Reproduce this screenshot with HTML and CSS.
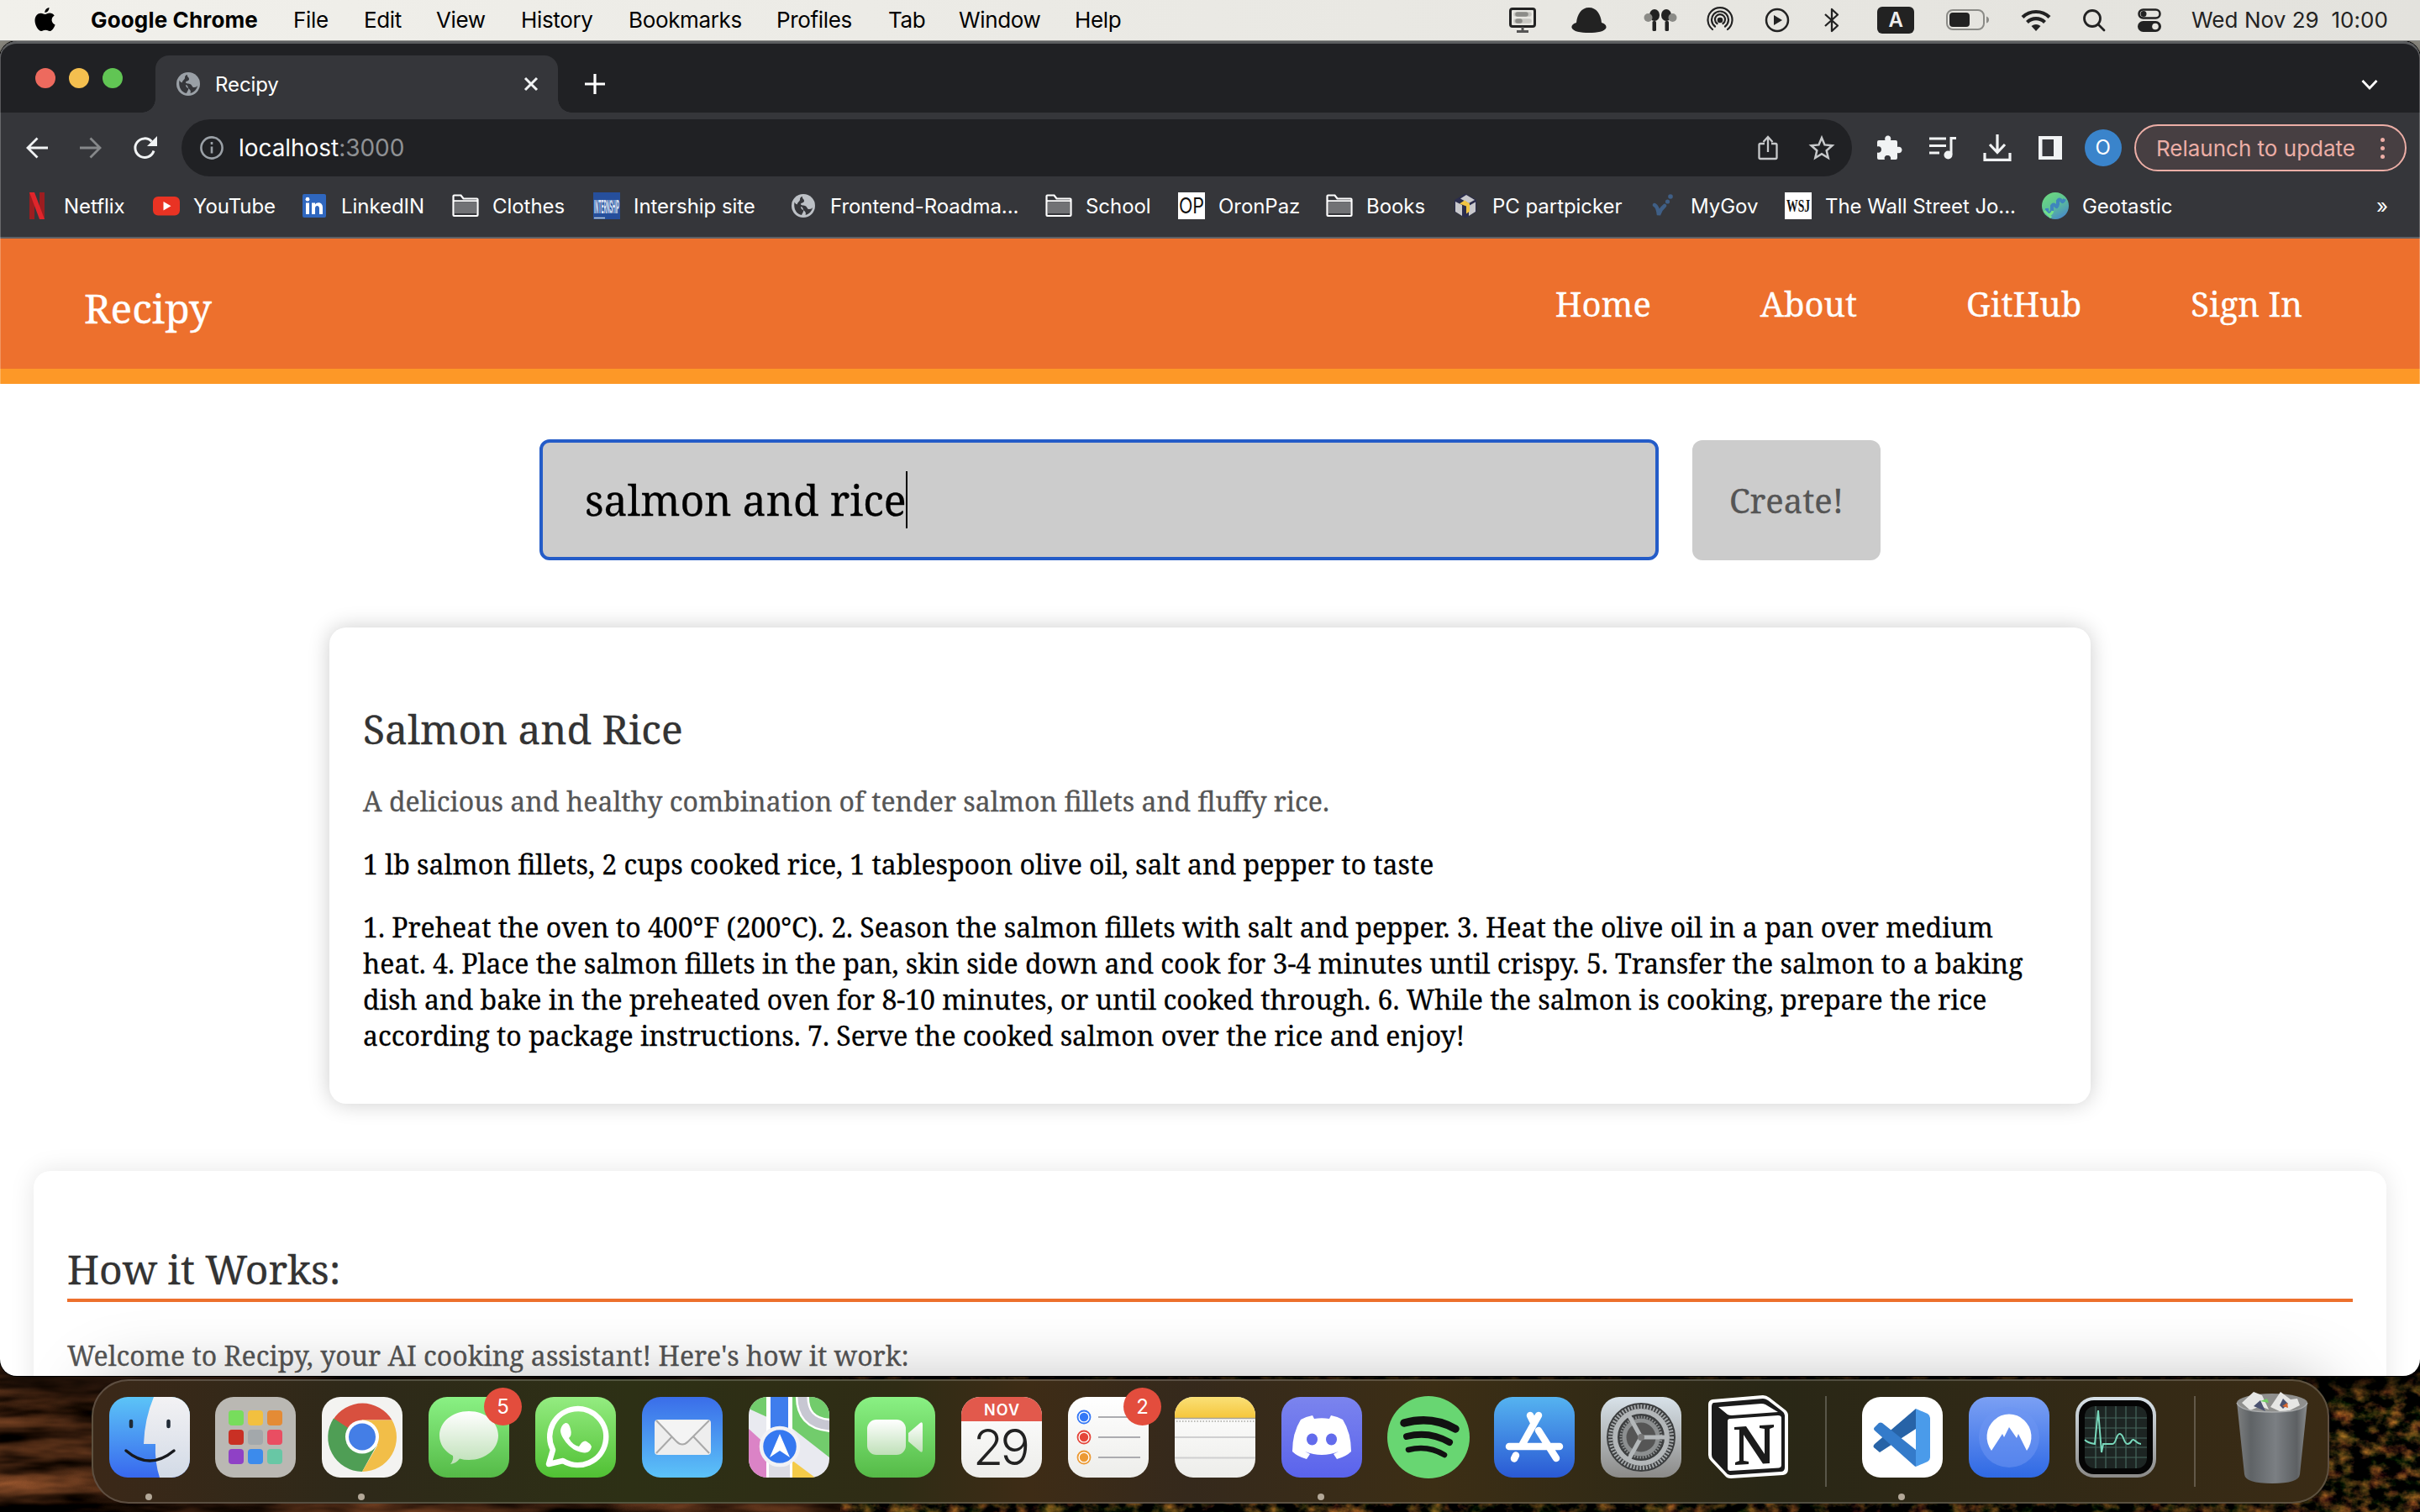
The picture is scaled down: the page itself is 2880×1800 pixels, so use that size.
FILE: index.html
```html
<!DOCTYPE html>
<html lang="en">
<head>
<meta charset="utf-8">
<title>Recipy</title>
<link rel="stylesheet" href="styles.css">
</head>
<body>
<svg class="defs" width="0" height="0" aria-hidden="true">
  <defs>
    <symbol id="globe" viewBox="0 0 28 28"><circle cx="14" cy="14" r="14" fill="currentColor"/><path d="M3.5 9.5C5 13 8 12 10 13.5s.5 4 3 5 .5 3-1 6.500C6 24 2 18 3.500 9.500zM13 3c-1 2.500 2.500 3 2 5.500s-4 1.500-4 3.500 4 1 6 2.500 1.500 3.500 4 3.500 3-1 4-2c-.5 4-4 8-8.500 9 1-2.500 0-4-1.500-5s-1-4-3.500-5S8 14.500 7 12.500 11 8 10 6c0-1 1-3 3-3z" fill="var(--land)"/></symbol>
    <symbol id="folder" viewBox="0 0 32 28"><path d="M1.500 25V2.500q0-1 1-1h8l3 4h16q1 0 1 1V25q0 1-1 1h-27q-1 0-1-1z" fill="#35363a" stroke="#fff" stroke-width="2.200"/><path d="M3 10h26v13H3z" fill="#717275"/><path d="M2 8.200h28" stroke="#fff" stroke-width="2"/></symbol>
    <linearGradient id="gFinder" x1="0" y1="0" x2="0" y2="1"><stop offset="0" stop-color="#5cc4f7"/><stop offset="1" stop-color="#3868ee"/></linearGradient>
    <linearGradient id="gFace" x1="0" y1="0" x2="0" y2="1"><stop offset="0" stop-color="#f3f2f4"/><stop offset="1" stop-color="#d2dae6"/></linearGradient>
    <linearGradient id="gGreen" x1="0" y1="0" x2="0" y2="1"><stop offset="0" stop-color="#8af184"/><stop offset="1" stop-color="#55ba47"/></linearGradient>
    <linearGradient id="gWhats" x1="0" y1="0" x2="0" y2="1"><stop offset="0" stop-color="#94ec81"/><stop offset="1" stop-color="#50c033"/></linearGradient>
    <linearGradient id="gMail" x1="0" y1="0" x2="0" y2="1"><stop offset="0" stop-color="#3a6de9"/><stop offset="1" stop-color="#5cc3f8"/></linearGradient>
    <linearGradient id="gWhite" x1="0" y1="0" x2="0" y2="1"><stop offset="0" stop-color="#fff"/><stop offset="1" stop-color="#ededea"/></linearGradient>
    <linearGradient id="gGlass" x1="0" y1="0" x2="0" y2="1"><stop offset="0" stop-color="#fff"/><stop offset="1" stop-color="#bfe0b8"/></linearGradient>
    <linearGradient id="gYellow" x1="0" y1="0" x2="0" y2="1"><stop offset="0" stop-color="#fae077"/><stop offset="1" stop-color="#f5c63c"/></linearGradient>
    <linearGradient id="gDiscord" x1="0" y1="0" x2="0" y2="1"><stop offset="0" stop-color="#7b84ee"/><stop offset="1" stop-color="#5a63ec"/></linearGradient>
    <linearGradient id="gStore" x1="0" y1="0" x2="0" y2="1"><stop offset="0" stop-color="#55b3f0"/><stop offset="1" stop-color="#2a59d4"/></linearGradient>
    <linearGradient id="gGray" x1="0" y1="0" x2="0" y2="1"><stop offset="0" stop-color="#d8e2e9"/><stop offset="1" stop-color="#8b8a88"/></linearGradient>
    <linearGradient id="gNord" x1="0" y1="0" x2="0" y2="1"><stop offset="0" stop-color="#7ba0f4"/><stop offset="1" stop-color="#2f69e4"/></linearGradient>
    <linearGradient id="gTrash" x1="0" y1="0" x2="1" y2="0"><stop offset="0" stop-color="#7d7f80"/><stop offset=".2" stop-color="#5f6366"/><stop offset=".55" stop-color="#7b7f83"/><stop offset=".85" stop-color="#5d6063"/><stop offset="1" stop-color="#8b8d8e"/></linearGradient>
    <linearGradient id="gGeo" x1="0" y1="0" x2=".6" y2="1"><stop offset="0" stop-color="#6fdc7c"/><stop offset=".5" stop-color="#5fc591"/><stop offset="1" stop-color="#4a8fc4"/></linearGradient>
    <clipPath id="tile"><rect width="96" height="96" rx="22"/></clipPath>
    <filter id="bark" x="0" y="0" width="100%" height="100%" color-interpolation-filters="sRGB"><feTurbulence type="fractalNoise" baseFrequency=".006 .03" numOctaves="4" seed="8"/><feColorMatrix values="1.200 0 0 0 -.39 .700 0 0 0 -.24 .400 0 0 0 -.15 0 0 0 0 1"/></filter>
    <filter id="leaves" x="0" y="0" width="100%" height="100%" color-interpolation-filters="sRGB"><feTurbulence type="fractalNoise" baseFrequency=".05 .07" numOctaves="4" seed="3"/><feColorMatrix values="1.500 0 0 0 -.63 .900 .200 0 0 -.46 .300 0 0 0 -.12 0 0 0 0 1"/></filter>
  </defs>
</svg>
<svg class="wallpaper" viewBox="0 0 2880 180" width="2880" height="180"><rect width="1000" height="180" filter="url(#bark)"/><rect x="1000" width="1880" height="180" filter="url(#leaves)"/></svg>

<div class="desktop">
  <header class="menubar">
    <nav class="menus">
      <span><svg width="27" height="32" viewBox="0 0 27 32"><path d="M18.500 1c.2 3-2.300 6-5.200 6C13 4.200 15.700 1.300 18.500 1zM13.700 9c1.300 0 3-1.500 5.500-1.500 2.200 0 4.300 1.200 5.500 3-4.600 2.700-3.900 9 .9 10.900-1 3-3.600 7.600-6.400 7.600-2 0-2.700-1.200-5-1.200-2.400 0-3.200 1.200-5 1.200C5.500 29 1.500 22 1.500 16.500c0-5.500 3.500-8.800 7-8.800 2.300 0 4 1.300 5.200 1.300z"/></svg></span>
      <b>Google Chrome</b><span>File</span><span>Edit</span><span>View</span><span>History</span><span>Bookmarks</span><span>Profiles</span><span>Tab</span><span>Window</span><span>Help</span>
    </nav>
    <div class="status">
      <span><svg width="32" height="30" viewBox="0 0 32 30"><rect x="1.500" y="1.500" width="29" height="21" rx="2.500" fill="none" stroke="#222" stroke-width="3"/><path d="M8 8h16M8 16h16" stroke="#c8c7c2" stroke-width="5.500" stroke-linecap="round"/><path d="M10 8h10M10 16h3" stroke="#8c8c88" stroke-width="5.500" stroke-linecap="round"/><path d="M16 23v5M9 28.500h14" stroke="#555" stroke-width="3"/></svg></span>
      <span><svg width="42" height="32" viewBox="0 0 42 32"><path d="M21 1c9 0 14 8 15 18 4 1 6 3.500 5.500 6C40 29.500 31 31 21 31S2 29.500.5 25C0 22.500 2 20 6 19 7 9 12 1 21 1z" fill="#222"/></svg></span>
      <span><svg width="40" height="28" viewBox="0 0 40 28"><g fill="#222"><ellipse cx="13" cy="8" rx="6" ry="7"/><ellipse cx="27" cy="8" rx="6" ry="7"/><rect x="10.500" y="15" width="4.500" height="12" rx="1.500"/><rect x="25.500" y="15" width="4.500" height="12" rx="1.500"/></g><g fill="#8b8b87"><ellipse cx="5.500" cy="11" rx="5" ry="5"/><ellipse cx="34.500" cy="11" rx="5" ry="5"/></g></svg></span>
      <span><svg width="32" height="32" viewBox="0 0 32 32" fill="none" stroke="#222" stroke-width="2.200" stroke-linecap="round"><circle cx="16" cy="16" r="2.200" fill="#222"/><path d="M7 27a14.500 14.500 0 1 1 18 0M10 23.500a10 10 0 1 1 12 0M12.500 20a6 6 0 1 1 7 0"/></svg></span>
      <span><svg width="30" height="30" viewBox="0 0 30 30"><circle cx="15" cy="15" r="13" fill="none" stroke="#222" stroke-width="2.500"/><path d="M11 9l10 6-10 6z" fill="#222"/></svg></span>
      <span><svg width="20" height="30" viewBox="0 0 20 30" fill="none" stroke="#222" stroke-width="2.300" stroke-linejoin="round"><path d="M2 8l15 13.500L10 28V2l7 6.500L2 22"/></svg></span>
      <span><i class="lang">A</i></span>
      <span><svg width="52" height="26" viewBox="0 0 52 26"><rect x="1" y="1" width="44" height="23" rx="7" fill="none" stroke="#8b8b87" stroke-width="2"/><rect x="4" y="4" width="24" height="17" rx="4" fill="#222"/><path d="M48 8.500q3 1 3 4t-3 4z" fill="#8b8b87"/></svg></span>
      <span><svg width="36" height="26" viewBox="0 0 36 26" fill="none" stroke="#222" stroke-width="4.200"><path d="M2 9.500a23 23 0 0 1 32 0M7.500 15.500a15 15 0 0 1 21 0"/><path d="M12.500 20q5.500-4 11 0L18 26z" fill="#222" stroke="none"/></svg></span>
      <span><svg width="28" height="28" viewBox="0 0 28 28" fill="none" stroke="#222" stroke-width="2.800" stroke-linecap="round"><circle cx="12" cy="12" r="9.500"/><path d="M19 19l7 7"/></svg></span>
      <span><svg width="28" height="28" viewBox="0 0 28 28"><rect x="1.500" y="1.500" width="25" height="10" rx="5" fill="none" stroke="#222" stroke-width="2.500"/><circle cx="7" cy="6.500" r="3.500" fill="#222"/><rect x="0" y="15" width="28" height="13" rx="6.500" fill="#222"/><circle cx="21" cy="21.500" r="3.800" fill="#e6e5df"/></svg></span>
      <time>Wed Nov 29&nbsp; 10:00</time>
    </div>
  </header>

  <main class="window">
    <div class="tabstrip">
      <div class="lights"><i></i><i></i><i></i></div>
      <div class="tab">
        <svg class="fav" width="28" height="28"><use href="#globe"/></svg><span>Recipy</span>
        <svg width="18" height="18" viewBox="0 0 18 18" stroke="#f1f3f4" stroke-width="3"><path d="M2 2l14 14M16 2L2 16"/></svg>
      </div>
      <svg class="plus" width="24" height="24" viewBox="0 0 24 24" stroke="#fff" stroke-width="3.200"><path d="M12 0v24M0 12h24"/></svg>
      <svg class="chev" width="20" height="14" viewBox="0 0 20 14" fill="none" stroke="#fff" stroke-width="2.800"><path d="M1.500 2L10 11l8.500-9"/></svg>
    </div>
    <div class="toolbar">
      <svg class="back" width="28" height="26" viewBox="0 0 28 26" fill="none" stroke="#f1f3f4" stroke-width="2.800"><path d="M27 13H3M14.500 1.500L3 13l11.500 11.500"/></svg>
      <svg class="fwd" width="28" height="26" viewBox="0 0 28 26" fill="none" stroke="#86888a" stroke-width="2.800"><path d="M1 13h24M13.500 1.500L25 13 13.500 24.500"/></svg>
      <svg class="reload" width="28" height="28" viewBox="0 0 28 28"><path d="M24 17.500A11.300 11.300 0 1 1 21.500 6.500" fill="none" stroke="#f1f3f4" stroke-width="3"/><path d="M28 0v12H16z" fill="#f1f3f4"/></svg>
      <div class="omnibox">
        <svg width="28" height="28" viewBox="0 0 28 28"><circle cx="14" cy="14" r="12.600" fill="none" stroke="#9aa0a6" stroke-width="2.600"/><path d="M14 12.500v8M14 7v3" stroke="#9aa0a6" stroke-width="2.600"/></svg>
        <span class="url">localhost<em>:3000</em></span>
        <svg width="24" height="30" viewBox="0 0 24 30" fill="none" stroke="#c7c9cb" stroke-width="2.300"><path d="M8 10H3q-1.500 0-1.500 1.500v15Q1.500 28 3 28h18q1.500 0 1.500-1.500v-15Q22.500 10 21 10h-5M12 20V2.500M6.500 8L12 2l5.500 6"/></svg>
        <svg class="star" width="30" height="30" viewBox="0 0 30 30" fill="none" stroke="#c7c9cb" stroke-width="2.500"><path d="M15 3l3.500 8.400 9 .8-6.800 6 2 8.800L15 22.300 7.300 27l2-8.800-6.800-6 9-.8z"/></svg>
      </div>
      <div class="actions">
        <svg width="30" height="30" viewBox="0 0 30 30" fill="#f1f3f4"><path d="M2 6h7.500C8.500 3 10 .5 12.800.5S17 3 16 6h6q2 0 2 2v6c3-1 5.500.8 5.500 3.500S27 22 24 21v6q0 2-2 2h-6c.8-3-1-5-3.700-5S8 26 9 29H2q-2 0-2-2v-6.500c3 .8 5-1 5-3.500s-2-4.500-5-3.500V8q0-2 2-2z"/></svg>
        <svg width="34" height="28" viewBox="0 0 34 28"><path d="M1 3h20M1 11.500h20M1 20h12M27 22V2.500h6" fill="none" stroke="#f1f3f4" stroke-width="3"/><circle cx="23.500" cy="22.500" r="5" fill="#f1f3f4"/></svg>
        <svg width="34" height="32" viewBox="0 0 34 32" fill="none" stroke="#f1f3f4" stroke-width="3.200"><path d="M17 0v20M8 12l9 9.500L26 12M2 22v8.300h30V22"/></svg>
        <svg width="28" height="28" viewBox="0 0 28 28"><path d="M0 0h28v28H0zM4.500 4v20H18V4z" fill="#f1f3f4" fill-rule="evenodd"/></svg>
        <i class="avatar">O</i>
        <div class="relaunch"><span>Relaunch to update</span><b></b></div>
      </div>
    </div>
    <div class="bookmarks">
      <div><svg viewBox="0 0 32 32"><path d="M7 0h6v32H7zM19 0h6v32h-6z" fill="#9c1d20"/><path d="M7 0h6l12 32h-6z" fill="#e0252b"/></svg>Netflix</div>
      <div><svg viewBox="0 0 32 32"><rect y="5" width="32" height="22.500" rx="6" fill="#e93323"/><path d="M12.500 11l9 5.200-9 5.200z" fill="#fff"/></svg>YouTube</div>
      <div><svg viewBox="0 0 32 32"><rect x="2" y="2" width="28" height="28" rx="2" fill="#2f67bf"/><path d="M6 12.500h4V26H6zM13 12.500h4v2c2-3.500 9-3 9 3.500v8h-4v-7c0-4-5-4-5 0v7h-4z" fill="#fff"/><circle cx="8" cy="8.200" r="2.400" fill="#fff"/></svg>LinkedIN</div>
      <div><svg viewBox="0 -2 32 32"><use href="#folder" width="32" height="28"/></svg>Clothes</div>
      <div><svg viewBox="0 0 32 32"><rect width="32" height="32" fill="#264f9c"/><path d="M1 30.500h13" stroke="#bcd" stroke-width="1.500"/><text x="1" y="25" textLength="30" lengthAdjust="spacingAndGlyphs" font-size="22" font-weight="700" fill="#dde6f5">INTERNSHIP</text></svg>Intership site</div>
      <div><svg class="light" viewBox="-2 -2 32 32"><use href="#globe" width="28" height="28"/></svg>Frontend-Roadma...</div>
      <div><svg viewBox="0 -2 32 32"><use href="#folder" width="32" height="28"/></svg>School</div>
      <div><svg viewBox="0 0 32 32"><rect width="32" height="32" fill="#fff"/><text x="1" y="25" textLength="30" lengthAdjust="spacingAndGlyphs" font-size="25" fill="#111">OP</text></svg>OronPaz</div>
      <div><svg viewBox="0 -2 32 32"><use href="#folder" width="32" height="28"/></svg>Books</div>
      <div><svg viewBox="0 0 32 32"><path d="M16 1.500L29 9v14l-13 7.500L3 23V9z" fill="#2b2d4c"/><path d="M4 11l8 4v13l-8-5zM20 16l8-4.500V23l-8 5z" fill="#c9c9cc"/><path d="M10 7.500L17 3l10 6-7 4z" fill="#c9c9cc"/><path d="M9 13.500l6-4 6 4v9l-4 3v-9z" fill="#f2c443"/></svg>PC partpicker</div>
      <div><svg viewBox="0 0 32 32"><path d="M5 15q4 2 5 12Q12 20 17 16" fill="none" stroke="#3f5f86" stroke-width="4.500" stroke-linecap="round"/><circle cx="20.500" cy="11" r="2.600" fill="#3f5f86"/><circle cx="24" cy="5" r="2.800" fill="#3f5f86"/></svg>MyGov</div>
      <div><svg viewBox="0 0 32 32"><rect width="32" height="32" fill="#fff"/><text x="2" y="23" textLength="28" lengthAdjust="spacingAndGlyphs" font-family="Liberation Serif, serif" font-weight="700" font-size="20" fill="#111">WSJ</text></svg>The Wall Street Jo...</div>
      <div><svg viewBox="0 0 32 32"><circle cx="16" cy="16" r="16" fill="url(#gGeo)"/><path d="M6 19v4q0 3 3 2t3-4v-5q2-3 4 0t3-2v-4q2-3 4 0t4-2" fill="none" stroke="#3f86bd" stroke-width="4"/><path d="M3 22l8 8M8 27q4-1 5-5" stroke="#72e08a" stroke-width="3" fill="none"/></svg>Geotastic</div>
      <div class="more">»</div>
    </div>

    <div class="page">
      <header class="site-header">
        <a class="brand">Recipy</a>
        <nav><a>Home</a><a>About</a><a>GitHub</a><a>Sign In</a></nav>
      </header>
      <div class="search">
        <div class="field"><span>salmon and rice</span><i class="caret"></i></div>
        <div class="button"><span>Create!</span></div>
      </div>
      <article class="recipe">
        <h1><span>Salmon and Rice</span></h1>
        <p class="muted">A delicious and healthy combination of tender salmon fillets and fluffy rice.</p>
        <p>1 lb salmon fillets, 2 cups cooked rice, 1 tablespoon olive oil, salt and pepper to taste</p>
        <p>1. Preheat the oven to 400°F (200°C). 2. Season the salmon fillets with salt and pepper. 3. Heat the olive oil in a pan over medium<br>heat. 4. Place the salmon fillets in the pan, skin side down and cook for 3-4 minutes until crispy. 5. Transfer the salmon to a baking<br>dish and bake in the preheated oven for 8-10 minutes, or until cooked through. 6. While the salmon is cooking, prepare the rice<br>according to package instructions. 7. Serve the cooked salmon over the rice and enjoy!</p>
      </article>
      <section class="how">
        <h2>How it Works:</h2>
        <p class="muted">Welcome to Recipy, your AI cooking assistant! Here's how it work:</p>
      </section>
    </div>
  </main>

  <footer class="dock">
    <div class="app on"><svg viewBox="0 0 96 96"><g clip-path="url(#tile)"><rect width="96" height="96" fill="url(#gFinder)"/><path d="M53 0Q42 26 41 56h14q-1 22 5 40h36V0z" fill="url(#gFace)"/></g><path d="M26 29v6M70.500 29v6" stroke="#1f2a36" stroke-width="4.500" stroke-linecap="round"/><path d="M20 64q28 24 57 0" fill="none" stroke="#17191d" stroke-width="3.500" stroke-linecap="round"/></svg></div>
    <div class="app"><svg viewBox="0 0 96 96"><rect width="96" height="96" rx="22" fill="#bab8b3"/><g><rect x="16" y="16" width="18" height="18" rx="4" fill="#77dd5c"/><rect x="39" y="16" width="18" height="18" rx="4" fill="#f2c03f"/><rect x="62" y="16" width="18" height="18" rx="4" fill="#e48b35"/><rect x="16" y="39" width="18" height="18" rx="4" fill="#c93024"/><rect x="39" y="39" width="18" height="18" rx="4" fill="#a3a8ab"/><rect x="62" y="39" width="18" height="18" rx="4" fill="#e94e62"/><rect x="16" y="62" width="18" height="18" rx="4" fill="#8f41c6"/><rect x="39" y="62" width="18" height="18" rx="4" fill="#3c8bec"/><rect x="62" y="62" width="18" height="18" rx="4" fill="#68c7a5"/></g></svg></div>
    <div class="app on"><svg viewBox="0 0 96 96"><rect width="96" height="96" rx="22" fill="#f3f3f1"/><path d="M48 48L13.200 27.500A41 41 0 0 1 83.500 27.500H48z" fill="#d8503f"/><path d="M48 48L14 25.500A41 41 0 0 0 48 89l17-31z" fill="#4f9e55"/><path d="M48 27.500h35.500A41 41 0 0 1 48 89l18-31z" fill="#f2be48"/><circle cx="48" cy="47.500" r="20" fill="#fff"/><circle cx="48" cy="47.500" r="16" fill="#447ee6"/></svg></div>
    <div class="app"><svg viewBox="0 0 96 96"><rect width="96" height="96" rx="22" fill="url(#gGreen)"/><path d="M48 17c20 0 35 13 35 29S68 75 48 75q-6 0-11-1.500Q33 79 26 80q4-5 3-10C19 65 13 56 13 46c0-16 15-29 35-29z" fill="url(#gGlass)"/></svg><b class="badge">5</b></div>
    <div class="app"><svg viewBox="0 0 96 96"><rect width="96" height="96" rx="22" fill="url(#gWhats)"/><path d="M16 80l5-17A33.500 33.500 0 1 1 33 76z" fill="none" stroke="#fff" stroke-width="6.500" stroke-linejoin="round"/><path d="M36 31q4-1 6 7t-2 11q4 8 12 10 5-8 9-6t6 6c-2 10-10 8-18 5S30 48 30 40q1-7 6-9z" fill="#fff"/></svg></div>
    <div class="app"><svg viewBox="0 0 96 96"><rect width="96" height="96" rx="22" fill="url(#gMail)"/><rect x="15" y="27" width="67" height="42" rx="4" fill="#eee"/><path d="M17 67l20-21M80 67L60 46" stroke="#a9a9a9" stroke-width="2"/><path d="M17 28l24 25q7 7 14 0l25-25" fill="#f4f4f4" stroke="#a9a9a9" stroke-width="2"/></svg></div>
    <div class="app"><svg viewBox="0 0 96 96"><g clip-path="url(#tile)"><rect width="96" height="96" fill="#e9eaf0"/><path d="M0 0h22v24L0 14zM50 0h46v72L50 36z" fill="#72cc6c"/><path d="M0 38l22 20v38H0z" fill="#db83c6"/><path d="M51 75l28 21H51z" fill="#f4cb49"/><path d="M64-4q-2 36 34 38" fill="none" stroke="#fff" stroke-width="16"/><path d="M64-4q-2 36 34 38" fill="none" stroke="#c7c7d2" stroke-width="11"/><path d="M21 0h31v96H21z" fill="#fff"/><path d="M26 0h21v40H26z" fill="#3f7ded"/><path d="M24 70h25v26H24z" fill="#dcdce4"/></g><circle cx="37" cy="59" r="22" fill="#3578f0" stroke="#f2f2f5" stroke-width="4.500"/><path d="M37 44l12 28-12-8-12 8z" fill="#fff"/></svg></div>
    <div class="app"><svg viewBox="0 0 96 96"><rect width="96" height="96" rx="22" fill="url(#gGreen)"/><rect x="15" y="27" width="46" height="42" rx="11" fill="url(#gGlass)"/><path d="M64 43l14-12q3-2 3 2v30q0 4-3 2L64 53z" fill="url(#gGlass)"/></svg></div>
    <div class="app"><svg viewBox="0 0 96 96"><g clip-path="url(#tile)"><rect width="96" height="96" fill="url(#gWhite)"/><rect width="96" height="29" fill="#e2594c"/></g><text x="27" y="22" textLength="42" font-size="18" font-weight="600" fill="#fff">NOV</text><text x="14" y="81" textLength="68" font-size="59" font-weight="300" fill="#222">29</text></svg></div>
    <div class="app"><svg viewBox="0 0 96 96"><rect width="96" height="96" rx="22" fill="url(#gWhite)"/><g fill="#fff" stroke-width="1.800"><circle cx="19" cy="24" r="7.500" stroke="#3478f6"/><circle cx="19" cy="48" r="7.500" stroke="#e5463a"/><circle cx="19" cy="72" r="7.500" stroke="#ec9a34"/></g><circle cx="19" cy="24" r="5.200" fill="#3478f6"/><circle cx="19" cy="48" r="5.200" fill="#e5463a"/><circle cx="19" cy="72" r="5.200" fill="#ec9a34"/><path d="M36 24h50M36 48h50M36 72h50" stroke="#acacb0" stroke-width="2"/></svg><b class="badge">2</b></div>
    <div class="app"><svg viewBox="0 0 96 96"><g clip-path="url(#tile)"><rect width="96" height="96" fill="url(#gWhite)"/><rect width="96" height="25" fill="url(#gYellow)"/><path d="M0 25.500h96" stroke="#a8a49a" stroke-width="1.500"/><path d="M2 29h94" stroke="#bcbcb8" stroke-width="2" stroke-dasharray="1.500 2"/><path d="M0 48h96M0 72.500h96" stroke="#cfcfd0" stroke-width="1.800"/></g></svg></div>
    <div class="app on"><svg viewBox="0 0 96 96"><rect width="96" height="96" rx="22" fill="url(#gDiscord)"/><path d="M37 22l2 4q9-1.500 18 0l2-4q8 1.500 14 5 10 16 10 38-6 6-17 9l-4-6 6-3q-20 8-40 0l6 3-4 6q-11-3-17-9 0-22 10-38 6-3.500 14-5z" fill="#fff"/><ellipse cx="36.500" cy="50.500" rx="6.500" ry="7" fill="#626bec"/><ellipse cx="59.500" cy="50.500" rx="6.500" ry="7" fill="#626bec"/></svg></div>
    <div class="app"><svg viewBox="0 0 96 96"><circle cx="48" cy="48" r="49" fill="#68d672"/><g fill="none" stroke="#111" stroke-linecap="round"><path d="M19 31q33-9 61 7" stroke-width="9.500"/><path d="M22 47q27-7 51 7" stroke-width="8"/><path d="M24 63q23-6 43 6" stroke-width="6.500"/></g></svg></div>
    <div class="app"><svg viewBox="0 0 96 96"><rect width="96" height="96" rx="22" fill="url(#gStore)"/><g stroke="#fff" stroke-width="8.500" stroke-linecap="round"><path d="M18 59h60M53 22L34 56M43 22l4 8M53 40l21 33M26 69.500l-2 4"/></g></svg></div>
    <div class="app"><svg viewBox="0 0 96 96"><rect width="96" height="96" rx="22" fill="url(#gGray)"/><circle cx="48" cy="48" r="41" fill="#3c3e3f"/><circle cx="48" cy="48" r="36.500" fill="none" stroke="#a5a9ab" stroke-width="5" stroke-dasharray="2 1.800"/><circle cx="48" cy="48" r="31" fill="none" stroke="#b3b7b9" stroke-width="6"/><circle cx="48" cy="48" r="20" fill="#555" stroke="#8c8f90" stroke-width="5"/><circle cx="48" cy="48" r="24" fill="none" stroke="#8c8f90" stroke-width="3" stroke-dasharray="1.700 1.700"/><path d="M48 48h32M48 48L33 21M48 48L33 75" stroke="#b3b7b9" stroke-width="5"/><circle cx="48" cy="48" r="4" fill="#777"/></svg></div>
    <div class="app"><svg viewBox="0 0 96 96"><path d="M6 3L66-2q4 0 8 3l18 14q4 3 4 7v64q0 6-6 7l-62 4q-5 0-7-3L4 76Q1 73 1 69V9q0-5 5-6z" fill="#fff"/><path d="M7 7L66 2q3 0 6 2l17 13q3 2 3 5v62q0 5-5 5l-60 4q-3 0-5-3L7 74q-2-2-2-5V12q0-4 2-5z" fill="#1b1b1b"/><path d="M13 12l51-4q3 0 5 1l15 9-55 4q-3 0-5-1zM24 29q0-3 3-3l57-4q4 0 4 3v56q0 3-3 3.500L27 88q-3 0-3-3z" fill="#fff"/><path d="M32 36l14-1 22 33V38l-6-1v-3l17-1v3l-5 2v41l-8 .5L43 45v31l6 1v3l-16 1v-3l5-2V39l-6 0z" fill="#1b1b1b"/></svg></div>
    <i class="sep"></i>
    <div class="app on"><svg viewBox="0 0 96 96"><rect width="96" height="96" rx="22" fill="#fff"/><path d="M64 14v24L21 66l-6-5q-3-2 0-5z" fill="#2763a7"/><path d="M15 36l5-5q2-1 4 0l40 32v20q-1 0-3-2L15 40q-2-2 0-4z" fill="#347bca"/><path d="M64 14l14 6q3 2 3 5v47q0 3-3 5l-14 6z" fill="#4a9bea"/></svg></div>
    <div class="app"><svg viewBox="0 0 96 96"><rect width="96" height="96" rx="22" fill="url(#gNord)"/><circle cx="48" cy="48" r="36" fill="#6d96f2" opacity=".55"/><path d="M27 64a26.500 27 0 1 1 42 0L59 44l-2 5-9-13-6 12-2-4z" fill="#fff"/></svg></div>
    <div class="app"><svg viewBox="0 0 96 96"><rect width="96" height="96" rx="22" fill="url(#gGray)"/><rect x="4" y="4" width="88" height="88" rx="18" fill="#050505"/><rect x="11" y="11" width="74" height="74" rx="12" fill="#1d2523"/><path d="M11 25h74M11 37h74M11 49h74M11 60h74M11 72h74M24 11v74M36 11v74M48 11v74M60 11v74M72 11v74" stroke="#46685e" stroke-width="1.200"/><path d="M11 51q4 4 12 5l4-40 4 50 2-10h11c5 0 4-13 9-12s4 12 9 12 4-6 7-5 4 5 9 5" fill="none" stroke="#78d8bb" stroke-width="2"/></svg></div>
    <i class="sep last"></i>
    <div class="app trash"><svg viewBox="0 0 96 96"><path d="M6 4q42 20 84 0l-9 86q-1 11-33 11T15 90z" fill="url(#gTrash)"/><ellipse cx="48" cy="5" rx="42" ry="11" fill="#8f8f8d"/><path d="M12 5l14-13 10 4 8 17-10-4-12 5zM46 10l12-18 12 9 8-1 3 8-12 6-10 2z" fill="#e6e6e4"/><path d="M26 9l8-7 6 13zM57 8l4-8 6 6-6 6z" fill="#4b5270"/><path d="M34 3l8-3 2 5z" fill="#6fce62"/><path d="M60 9l6-4 1 6z" fill="#d5642e"/><path d="M6 5q4 11 42 11T90 5" fill="none" stroke="#a9abac" stroke-width="1.500"/></svg></div>
  </footer>
</div>
</body>
</html>
```
FILE: styles.css
```css
* { box-sizing: border-box; }
body {
  margin: 0;
  width: 2880px;
  height: 1800px;
  overflow: hidden;
  background: #0d0a06;
  font-family: Inter, "Liberation Sans", sans-serif;
  position: relative;
}
i, em { font-style: normal; }
svg { display: block; flex: none; overflow: visible; }
.defs { position: absolute; }
.wallpaper { position: absolute; left: 0; bottom: 0; }
.desktop {
  position: relative;
  display: flex;
  flex-direction: column;
  align-items: center;
  height: 1800px;
  background: linear-gradient(#8f8d84, #8f8d84) 0 0 / 100% 80px no-repeat;
}

/* System menu bar */
.menubar {
  position: relative;
  z-index: 1;
  width: 100%;
  height: 49px;
  display: flex;
  justify-content: space-between;
  background: linear-gradient(90deg, #f1f0eb, #e3e2dd);
  border-bottom: 1px solid #8b8c89;
  font-size: 26px;
  line-height: 46px;
  letter-spacing: -.35px;
  color: #000;
  white-space: nowrap;
}
.menus, .status { display: flex; align-items: center; }
.menus { padding-left: 40px; }
.menus > :nth-child(1) { width: 68px; }
.menus > :nth-child(2) { width: 241px; font-weight: 700; letter-spacing: .15px; }
.menus > :nth-child(3) { width: 84px; }
.menus > :nth-child(4) { width: 86px; }
.menus > :nth-child(5) { width: 101px; }
.menus > :nth-child(6) { width: 128px; }
.menus > :nth-child(7) { width: 176px; }
.menus > :nth-child(8) { width: 133px; }
.menus > :nth-child(9) { width: 84px; }
.menus > :nth-child(10) { width: 138px; }
.status { color: #222; }
.status > :nth-child(1) { width: 74px; }
.status > :nth-child(2) { width: 86px; }
.status > :nth-child(3) { width: 75px; }
.status > :nth-child(4) { width: 69px; }
.status > :nth-child(5) { width: 70px; }
.status > :nth-child(6) { width: 64px; }
.status > :nth-child(7) { width: 82px; }
.status > :nth-child(8) { width: 89px; }
.status > :nth-child(9) { width: 73px; }
.status > :nth-child(10) { width: 66px; }
.status > :nth-child(11) { width: 64px; }
.status time { width: 272px; letter-spacing: .05px; }
.lang {
  display: block;
  width: 44px;
  height: 32px;
  border-radius: 6px;
  background: #222;
  color: #eee;
  font-size: 24px;
  font-weight: 600;
  line-height: 32px;
  text-align: center;
}

/* Browser window */
.window {
  flex: none;
  width: 2880px;
  height: 1589px;
  border-radius: 20px;
  overflow: hidden;
  background: #fff;
  box-shadow: 0 0 0 1px #000, 0 14px 30px rgba(0, 0, 0, .8);
  position: relative;
}
.window::after {
  content: "";
  position: absolute;
  inset: 0 0 1180px;
  border: 1px solid rgba(255, 255, 255, .25);
  border-top: 3px solid #5c5e60;
  border-bottom: 0;
  border-radius: 20px 20px 0 0;
}
.tabstrip {
  height: 85px;
  background: #202124;
  display: flex;
  padding: 17px 50px 0 42px;
}
.lights { display: flex; gap: 16px; padding-top: 15px; width: 143px; }
.lights i { width: 24px; height: 24px; border-radius: 50%; background: #ed6a5e; }
.lights i:nth-child(2) { background: #f4bf4f; }
.lights i:nth-child(3) { background: #61c554; }
.tab {
  position: relative;
  width: 479px;
  height: 68px;
  background: #35363a;
  border-radius: 16px 16px 0 0;
  display: flex;
  align-items: center;
  padding: 0 23px 0 25px;
  color: #fff;
  font-size: 24px;
  letter-spacing: -.1px;
}
.tab::before, .tab::after {
  content: "";
  position: absolute;
  bottom: 0;
  left: -16px;
  width: 16px;
  height: 16px;
  background: radial-gradient(circle at 0 0, transparent 15.5px, #35363a 16px);
}
.tab::after { left: auto; right: -16px; transform: scaleX(-1); }
.tab span { flex: 1; padding-left: 18px; }
.fav { color: #9aa0a6; --land: #35363a; }
.plus { margin: 22px auto 0 32px; }
.chev { margin-top: 28px; }
.toolbar {
  height: 84px;
  background: #35363a;
  display: flex;
  align-items: center;
  padding: 0 16px 0 30px;
}
.fwd { margin-left: 36px; }
.reload { margin: 0 29px 0 37px; }
.omnibox {
  width: 1988px;
  height: 68px;
  border-radius: 34px;
  background: #202124;
  display: flex;
  align-items: center;
  padding: 0 21px 0 22px;
}
.url { flex: 1; padding-left: 18px; font-size: 28px; letter-spacing: -.05px; color: #fff; }
.url em { color: #8f9194; }
.star { margin-left: 37px; }
.actions { display: flex; align-items: center; justify-content: space-between; width: 630px; margin-left: 30px; }
.avatar {
  width: 44px;
  height: 44px;
  margin: 0 -16px 0 -4px;
  border-radius: 50%;
  background: #3a84cb;
  color: #fff;
  font-size: 24px;
  line-height: 44px;
  text-align: center;
}
.relaunch {
  width: 324px;
  height: 56px;
  border: 2px solid #ecaea6;
  border-radius: 28px;
  background: #473f42;
  color: #ecaea6;
  font-size: 26px;
  display: flex;
  align-items: center;
  justify-content: space-between;
  padding: 0 24px 0 24px;
  white-space: nowrap;
}
.relaunch b { width: 5px; height: 5px; border-radius: 50%; background: #ecaea6; box-shadow: 0 -10px #ecaea6, 0 10px #ecaea6; }
.bookmarks {
  height: 66px;
  background: #35363a;
  border-bottom: 2px solid #5f6165;
  display: flex;
  padding: 0 0 10px 28px;
  color: #fff;
  font-size: 24px;
  letter-spacing: -.05px;
  white-space: nowrap;
}
.bookmarks div { flex: none; display: flex; align-items: center; gap: 16px; width: 154px; }
.bookmarks svg { width: 32px; height: 32px; }
.light { color: #bdc1c6; --land: #35363a; }
.bookmarks div:nth-child(2) { width: 176px; }
.bookmarks div:nth-child(3) { width: 180px; }
.bookmarks div:nth-child(4) { width: 168px; }
.bookmarks div:nth-child(5) { width: 234px; }
.bookmarks div:nth-child(6) { width: 304px; }
.bookmarks div:nth-child(7) { width: 158px; }
.bookmarks div:nth-child(8) { width: 176px; }
.bookmarks div:nth-child(9) { width: 150px; }
.bookmarks div:nth-child(10) { width: 236px; }
.bookmarks div:nth-child(11) { width: 160px; }
.bookmarks div:nth-child(12) { width: 306px; }
.bookmarks div:nth-child(13) { width: 398px; }
.bookmarks .more { width: 20px; }

/* Recipy site */
.page {
  font-family: "Noto Serif", "DejaVu Serif Condensed", "DejaVu Serif", serif;
  font-size: 32px;
  line-height: 43px;
  color: #000;
  -webkit-text-stroke: .3px currentColor;
}
.site-header {
  height: 173px;
  background: #ed702d;
  border-bottom: 18px solid #fd9827;
  display: flex;
  justify-content: space-between;
  color: #fff;
  padding: 0 140px 0 100px;
}
.brand { font-size: 48px; line-height: 166px; }
.site-header nav { display: flex; gap: 130px; font-size: 40px; line-height: 156px; }
.search { display: flex; justify-content: center; gap: 40px; padding-top: 66px; }
.field {
  width: 1332px;
  height: 144px;
  border: 4px solid #245cc8;
  border-radius: 12px;
  background: #ccc;
  font-size: 50px;
  display: flex;
  align-items: center;
  padding-left: 50px;
}
.caret { width: 2px; height: 68px; margin-left: -1px; background: #000; }
.button {
  width: 224px;
  height: 143px;
  margin-top: 1px;
  border-radius: 12px;
  background: #ccc;
  color: #555;
  font-size: 40px;
  display: flex;
  align-items: center;
  justify-content: center;
}
.recipe {
  width: 2096px;
  height: 567px;
  margin: 80px auto 0;
  padding: 88px 40px 0;
  border-radius: 20px;
  background: #fff;
  box-shadow: 0 0 26px rgba(0, 0, 0, .2);
  white-space: nowrap;
}
h1, h2 { margin: 0; font-size: 48px; font-weight: 400; line-height: 65px; color: #333; }
p { margin: 32px 0 0; }
.muted { color: #555; }
.how {
  height: 400px;
  margin: 80px 40px 0;
  padding: 84px 40px 0;
  border-radius: 20px;
  background: #fff;
  box-shadow: 0 0 30px rgba(0, 0, 0, .1);
}
.how h2 { height: 72px; border-bottom: 4px solid #ed702d; }
.how p { margin-top: 42px; }

/* Dock */
.dock {
  position: relative;
  flex: none;
  display: flex;
  gap: 30.850px;
  width: 2663px;
  height: 148px;
  margin-top: 4px;
  padding: 19px 0 0 19px;
  border: 2px solid rgba(255, 255, 255, .18);
  border-radius: 44px;
  background: linear-gradient(90deg, #3b2818, #2e2919 12%, #2d3015 24%, #2f2c15 36%, #3e2c16 42%, #35291c 49%, #3c2e15 60%, #292716 75%, #302916 85%, #3a2b15);
  box-shadow: 0 0 80px rgba(0, 0, 0, .26);
}
.app { position: relative; flex: none; width: 96px; height: 96px; }
.app svg { width: 96px; height: 96px; }
.trash { top: 2px; }
.app.on::after {
  content: "";
  position: absolute;
  left: 43px;
  top: 115px;
  width: 8px;
  height: 8px;
  border-radius: 50%;
  background: #b3a898;
}
.badge {
  position: absolute;
  right: -15px;
  top: -11px;
  width: 45px;
  height: 45px;
  border-radius: 50%;
  background: #e34d3d;
  color: #fff;
  font-size: 24px;
  font-weight: 400;
  line-height: 45px;
  text-align: center;
}
.sep { flex: none; width: 2px; height: 108px; margin: -1px 11px 0 13px; background: rgba(255, 255, 255, .22); }
.sep.last { margin: -1px 12px 0 15px; }
```
